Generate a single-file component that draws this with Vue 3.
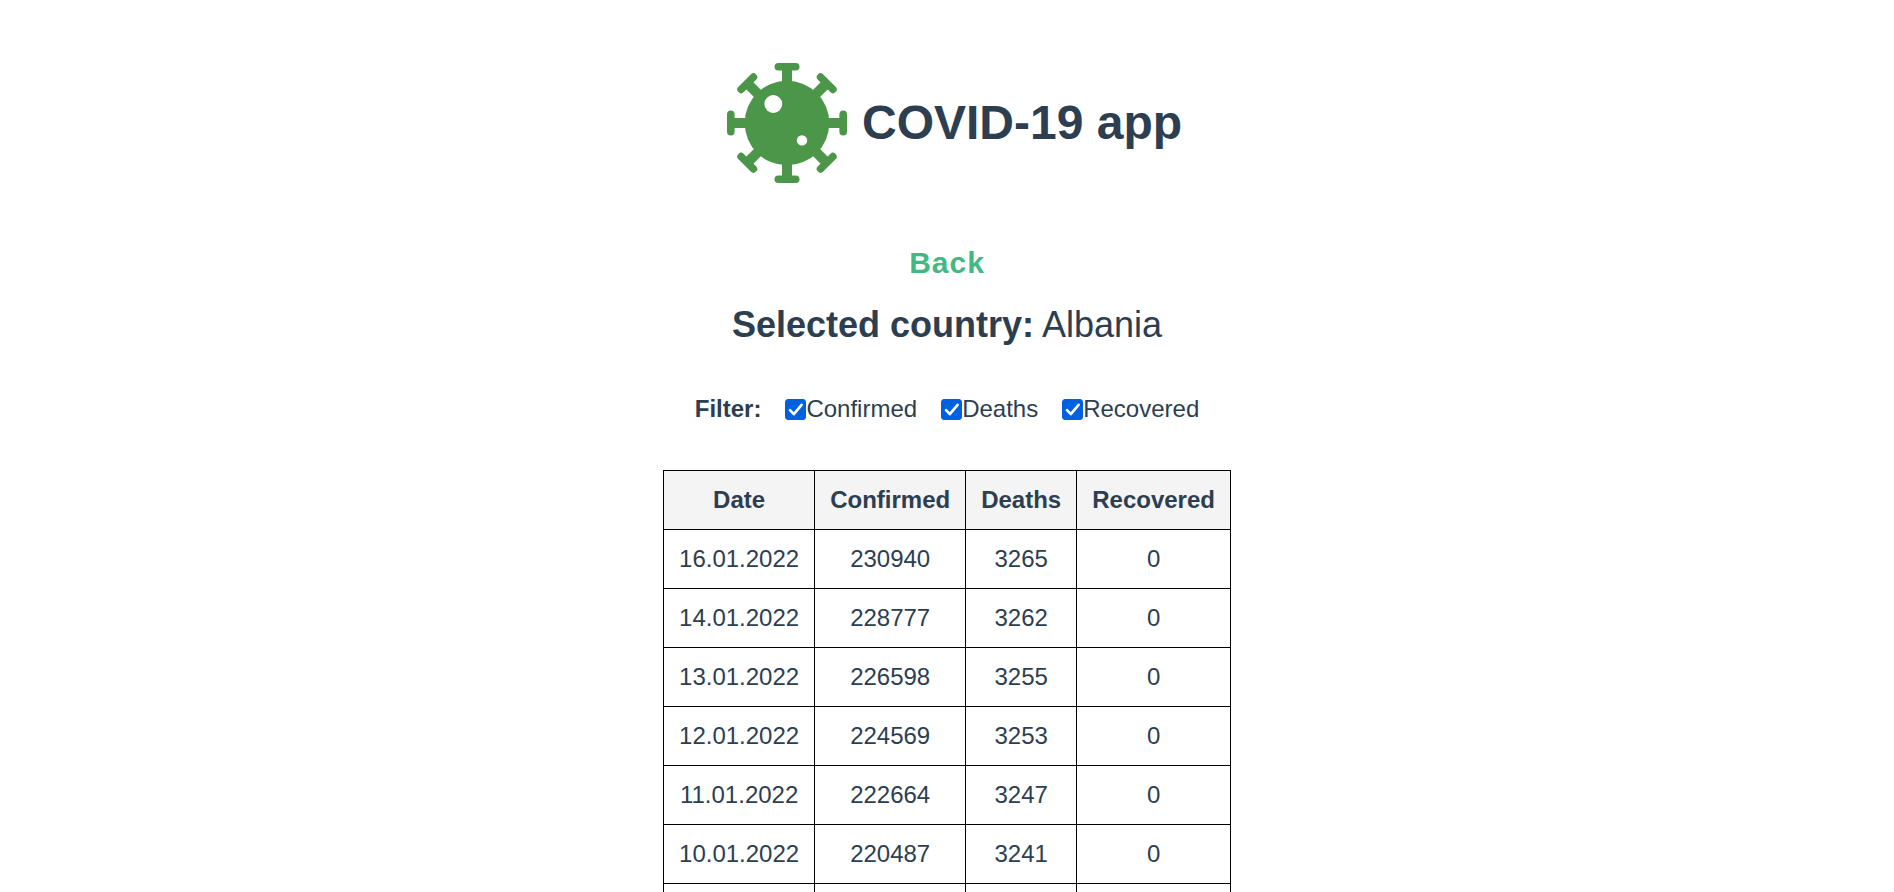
<script setup>
import { computed, ref } from 'vue'

const country = 'Albania'

const filters = ref([
  { key: 'confirmed', label: 'Confirmed', active: true },
  { key: 'deaths', label: 'Deaths', active: true },
  { key: 'recovered', label: 'Recovered', active: true },
])

const rows = [
  { date: '16.01.2022', confirmed: 230940, deaths: 3265, recovered: 0 },
  { date: '14.01.2022', confirmed: 228777, deaths: 3262, recovered: 0 },
  { date: '13.01.2022', confirmed: 226598, deaths: 3255, recovered: 0 },
  { date: '12.01.2022', confirmed: 224569, deaths: 3253, recovered: 0 },
  { date: '11.01.2022', confirmed: 222664, deaths: 3247, recovered: 0 },
  { date: '10.01.2022', confirmed: 220487, deaths: 3241, recovered: 0 },
  { date: '09.01.2022', confirmed: 219694, deaths: 3233, recovered: 0 },
]

const columns = computed(() => filters.value.filter((f) => f.active))
const spikes = [0, 45, 90, 135, 180, 225, 270, 315]
</script>

<template>
  <div class="app">
    <header class="header">
      <svg class="logo" viewBox="0 0 120 120" aria-hidden="true">
        <g fill="#4c964a">
          <g v-for="angle in spikes" :key="angle" :transform="`rotate(${angle} 60 60)`">
            <rect x="47.5" y="0" width="25" height="7.6" rx="3.8" />
            <rect x="55" y="4" width="10" height="20" />
          </g>
          <circle cx="60" cy="60" r="42.3" />
        </g>
        <circle cx="46.3" cy="41" r="8.9" fill="#fff" />
        <circle cx="75" cy="77.4" r="5.2" fill="#fff" />
      </svg>
      <h1 class="title">COVID-19 app</h1>
    </header>

    <main class="content">
      <a class="back" href="#/">Back</a>
      <p class="country"><strong>Selected country:</strong> {{ country }}</p>

      <div class="filter" role="group" aria-labelledby="filter-title">
        <strong id="filter-title">Filter:</strong>
        <label v-for="f in filters" :key="f.key" class="option" :for="f.key">
          <span class="box">
            <input :id="f.key" v-model="f.active" class="check" type="checkbox" />
            <svg v-if="f.active" class="tick" viewBox="0 0 21 21" aria-hidden="true">
              <path
                d="M5 11.2 L8.8 15.2 L16.6 5.8"
                fill="none"
                stroke="#fff"
                stroke-width="2.6"
                stroke-linecap="round"
                stroke-linejoin="round"
              />
            </svg>
          </span>
          <span>{{ f.label }}</span>
        </label>
      </div>

      <table class="table">
        <thead>
          <tr>
            <th scope="col">Date</th>
            <th v-for="c in columns" :key="c.key" scope="col">{{ c.label }}</th>
          </tr>
        </thead>
        <tbody>
          <tr v-for="row in rows" :key="row.date">
            <td>{{ row.date }}</td>
            <td v-for="c in columns" :key="c.key">{{ row[c.key] }}</td>
          </tr>
        </tbody>
      </table>
    </main>
  </div>
</template>

<style>
body {
  margin: 0;
  background: #fff;
}
html {
  scrollbar-width: none;
}
</style>

<style scoped>
.app {
  padding-top: 63px;
  font-family: "Liberation Sans", Arial, Helvetica, sans-serif;
  font-size: 24px;
  line-height: 28px;
  color: #2c3e50;
  text-align: center;
}
.header {
  display: flex;
  justify-content: center;
  align-items: center;
}
.logo {
  width: 120px;
  height: 120px;
  margin: 0 15px;
}
.title {
  margin: 0;
  font-size: 48px;
  line-height: 56px;
}
.content {
  display: flex;
  flex-direction: column;
  align-items: center;
  padding-top: 63px;
}
.back {
  font-size: 30px;
  line-height: 34px;
  font-weight: bold;
  letter-spacing: 1px;
  color: #42b983;
  text-decoration: none;
}
.country {
  margin: 24px 0 49px;
  font-size: 36px;
  line-height: 42px;
}
.filter {
  display: flex;
  gap: 24px;
  margin-bottom: 47px;
}
.option {
  display: flex;
  align-items: center;
}
.box {
  display: grid;
  width: 21px;
  height: 21px;
}
.check,
.tick {
  grid-area: 1 / 1;
  width: 21px;
  height: 21px;
  margin: 0;
}
.check {
  appearance: none;
  border: 1px solid #8f8f9d;
  border-radius: 3px;
  background: #fff;
}
.check:checked {
  border-color: #0061e0;
  background: #0061e0;
}
.check:focus-visible {
  outline: 2px solid #0061e0;
  outline-offset: 2px;
}
.tick {
  pointer-events: none;
}
.table {
  border-collapse: collapse;
}
.table th,
.table td {
  padding: 15px;
  border: 1px solid #000;
}
.table th {
  background: #f4f4f4;
}
</style>
